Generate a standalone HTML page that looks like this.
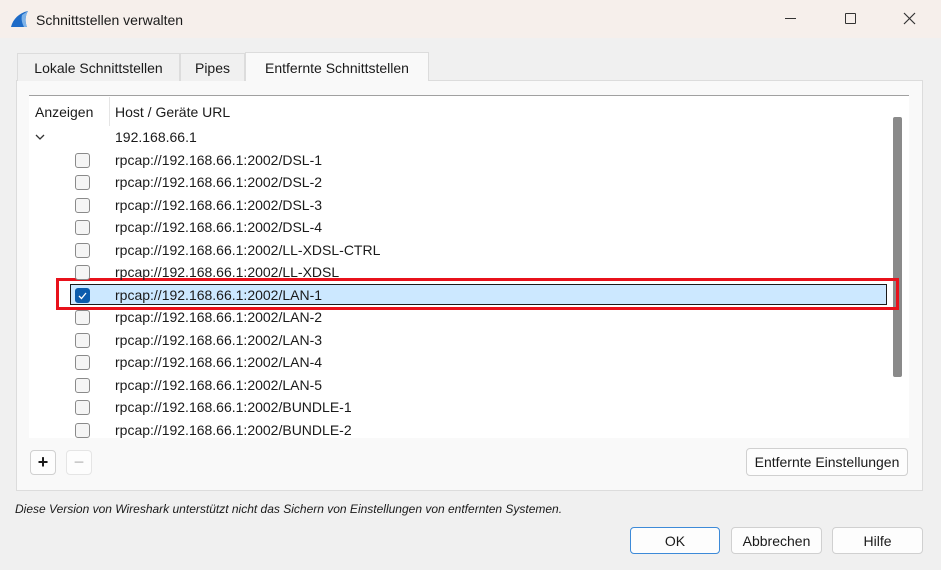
<!DOCTYPE html>
<html><head><meta charset="utf-8"><style>
*{box-sizing:border-box;margin:0;padding:0}
body{width:941px;height:570px;background:#f0f0f0;font-family:"Liberation Sans",sans-serif;font-size:14px;color:#1a1a1a;position:relative;overflow:hidden}
.a{position:absolute}
.title{left:0;top:0;width:941px;height:38px;background:#f6efeb}
.tab{top:53px;height:28px;border:1px solid #dcdcdc;border-bottom:none;background:#f0f0f0;line-height:29px;text-align:center;font-size:14px}
.pane{left:16px;top:80px;width:907px;height:411px;border:1px solid #dcdcdc;background:#f9f9f9}
.tree{left:29px;top:95px;width:880px;height:343px;background:#fff;border-top:1px solid #a0a0a0}
.row{left:115px;height:22px;line-height:22px;font-size:14px}
.cb{left:75px;width:15px;height:15px;border:1px solid #8a8a8a;border-radius:3px;background:#f5f5f5}
.btn{background:#fdfdfd;border:1px solid #d0d0d0;border-radius:4px;text-align:center;font-size:14px}
</style></head><body>
<div class="a title"></div>
<svg class="a" style="left:10px;top:10px" width="20" height="18"><path d="M1 17 C3 9 9 3 18 1 C15 6 15 12 17 17 Z" fill="#1e6bc7"/><path d="M12 5 C11 9 12 13 14 17 L17 17 C15 12 15 6 18 1Z" fill="#7fb3e8"/></svg>
<div class="a" style="left:36px;top:12px;font-size:14px">Schnittstellen verwalten</div>
<div class="a" style="left:785px;top:18px;width:11px;height:1px;background:#333"></div>
<div class="a" style="left:845px;top:13px;width:11px;height:11px;border:1px solid #333;border-radius:1px"></div>
<svg class="a" style="left:903px;top:12px" width="13" height="13"><path d="M1 1L12 12M12 1L1 12" stroke="#333" stroke-width="1.2"/></svg>
<div class="a pane"></div>
<div class="a tab" style="left:17px;width:163px">Lokale Schnittstellen</div>
<div class="a tab" style="left:180px;width:65px">Pipes</div>
<div class="a tab" style="left:245px;top:52px;height:29px;width:184px;background:#f9f9f9;line-height:30px">Entfernte Schnittstellen</div>
<div class="a tree"></div>
<div class="a" style="left:35px;top:104px">Anzeigen</div>
<div class="a" style="left:109px;top:97px;width:1px;height:29px;background:#e5e5e5"></div>
<div class="a" style="left:115px;top:104px">Host / Geräte URL</div>
<svg class="a" style="left:35px;top:134px" width="10" height="7"><path d="M1 1L5 5L9 1" stroke="#333" fill="none" stroke-width="1.3"/></svg>
<div class="a row" style="top:126px">192.168.66.1</div>
<div class="a" style="left:70px;top:284px;width:817px;height:21px;background:#cce8ff;border:1px solid #1a1a1a"></div>
<div class="a" style="left:893px;top:117px;width:9px;height:260px;background:#8a8a8a;border-radius:2px"></div>
<div class="a" style="left:56px;top:278px;width:843px;height:32px;border:3px solid #e8111b"></div>
<div id="rows"></div>
<div class="a btn" style="left:30px;top:450px;width:26px;height:25px;font-size:18px;line-height:22px;font-weight:bold">+</div>
<div class="a btn" style="left:66px;top:450px;width:26px;height:25px;border-color:#e5e5e5;color:#bbb;font-size:18px;line-height:22px">−</div>
<div class="a btn" style="left:746px;top:448px;width:162px;height:28px;line-height:26px">Entfernte Einstellungen</div>
<div class="a" style="left:15px;top:502px;font-size:12px;font-style:italic">Diese Version von Wireshark unterstützt nicht das Sichern von Einstellungen von entfernten Systemen.</div>
<div class="a btn" style="left:630px;top:527px;width:90px;height:27px;line-height:27px;border:1px solid #3d8ad8">OK</div>
<div class="a btn" style="left:731px;top:527px;width:91px;height:27px;line-height:27px">Abbrechen</div>
<div class="a btn" style="left:832px;top:527px;width:91px;height:27px;line-height:27px">Hilfe</div>
<script>
var n=["DSL-1","DSL-2","DSL-3","DSL-4","LL-XDSL-CTRL","LL-XDSL","LAN-1","LAN-2","LAN-3","LAN-4","LAN-5","BUNDLE-1","BUNDLE-2"],h="";
n.forEach(function(s,i){var y=148.5+i*22.5;
if(i==6)h+='<div class="a cb" style="top:'+(y+4)+'px;background:#0b5cad;border-color:#0b5cad"><svg width="13" height="13" style="position:absolute;left:0;top:0"><path d="M3 7L5.5 9.5L10 4" stroke="#fff" fill="none" stroke-width="1.3"/></svg></div>';
else h+='<div class="a cb" style="top:'+(y+4)+'px"></div>';
h+='<div class="a row" style="top:'+y+'px">rpcap://192.168.66.1:2002/'+s+'</div>';});
document.getElementById('rows').innerHTML=h;
</script>
</body></html>
